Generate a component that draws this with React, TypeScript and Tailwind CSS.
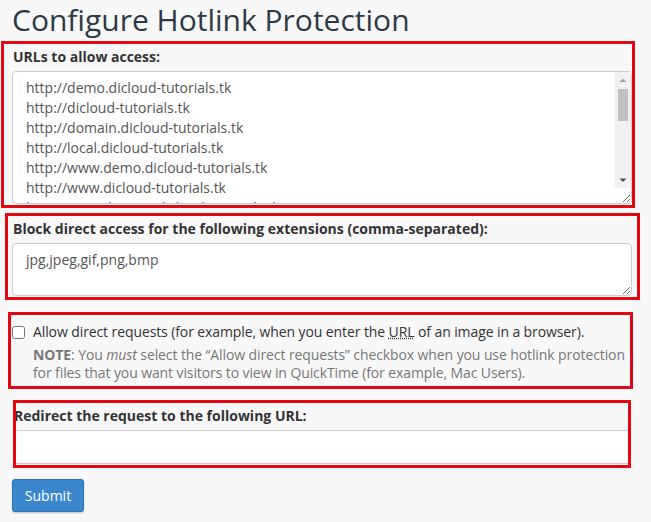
const URLS = [
  "http://demo.dicloud-tutorials.tk",
  "http://dicloud-tutorials.tk",
  "http://domain.dicloud-tutorials.tk",
  "http://local.dicloud-tutorials.tk",
  "http://www.demo.dicloud-tutorials.tk",
  "http://www.dicloud-tutorials.tk",
  "http://www.domain.dicloud-tutorials.tk",
  "http://www.local.dicloud-tutorials.tk",
  "https://demo.dicloud-tutorials.tk",
  "https://dicloud-tutorials.tk",
  "https://domain.dicloud-tutorials.tk",
  "https://local.dicloud-tutorials.tk",
  "https://www.demo.dicloud-tutorials.tk",
  "https://www.dicloud-tutorials.tk",
  "https://www.domain.dicloud-tutorials.tk",
  "https://www.local.dicloud-tutorials.tk",
  "http://mail.dicloud-tutorials.tk",
  "http://webmail.dicloud-tutorials.tk",
  "http://cpanel.dicloud-tutorials.tk",
  "https://mail.dicloud-tutorials.tk",
  "https://webmail.dicloud-tutorials.tk",
  "https://cpanel.dicloud-tutorials.tk",
];

// red annotation frame drawn over the content
const frame = "outline-3 outline-[#e30613] -outline-offset-3";

function Scrollbar() {
  return (
    <div className="absolute right-[1px] top-[1px] bottom-[16px] w-[16px] bg-[#f1f1f1] flex flex-col items-center pointer-events-none">
      <svg width="16" height="16" viewBox="0 0 16 16" className="shrink-0">
        <path d="M4.5 10 L8 6.5 L11.5 10 Z" fill="#a3a3a3" />
      </svg>
      <div className="w-[10px] h-[32px] bg-[#c1c1c1] mt-[1px]" />
      <div className="flex-1" />
      <svg width="16" height="16" viewBox="0 0 16 16" className="shrink-0">
        <path d="M4.5 6.5 L8 10 L11.5 6.5 Z" fill="#505050" />
      </svg>
    </div>
  );
}

export default function App() {
  return (
    <div className="w-[651px] h-[522px] overflow-hidden bg-[#f8f8f8] text-[#333] text-[14px] font-['Open_Sans',sans-serif]">
      {/* Title */}
      <h1 className="h-[41px] pl-[12px] pt-[1px] text-[30px] leading-[38px] text-[#2c3a47] font-normal">
        Configure Hotlink Protection
      </h1>

      {/* Allowed URLs */}
      <div className={`ml-[1px] w-[634px] h-[167px] pt-[6px] ${frame}`}>
        <label className="block pl-[12px] font-bold leading-[20px]">URLs to allow access:</label>
        <div className="relative mt-[4px] ml-[11px] w-[620px] h-[133px]">
          <textarea
            readOnly
            defaultValue={URLS.join("\n")}
            className="block w-full h-full overflow-hidden bg-white border border-[#ccc] rounded-[4px] pl-[13px] pr-[20px] pt-[6px] leading-[20px] text-[#555] outline-none"
          />
          <Scrollbar />
        </div>
      </div>

      {/* Extensions */}
      <div className={`mt-[5px] ml-[5px] w-[635px] h-[87px] pt-[6px] ${frame}`}>
        <label className="block pl-[8px] font-bold leading-[20px]">
          Block direct access for the following extensions (comma-separated):
        </label>
        <textarea
          readOnly
          defaultValue="jpg,jpeg,gif,png,bmp"
          className="mt-[4px] ml-[7px] block w-[620px] h-[53px] bg-white border border-[#ccc] rounded-[4px] pl-[13px] pt-[6px] leading-[20px] text-[#555] outline-none"
        />
      </div>

      {/* Allow direct requests */}
      <div className={`mt-[12px] ml-[8px] w-[625px] h-[77px] pt-[10px] tracking-[-0.1px] ${frame}`}>
        <div className="flex items-center pl-[4px] leading-[20px]">
          <input type="checkbox" className="m-0 w-[13px] h-[13px]" />
          <span className="ml-[8px]">
            Allow direct requests (for example, when you enter the{" "}
            <abbr title="Uniform Resource Locator" className="underline decoration-dotted">URL</abbr> of an image in a browser).
          </span>
        </div>
        <p className="mt-[4px] pl-[25px] pr-[1px] leading-[18px] text-[#777]">
          <b>NOTE</b>: You <i>must</i> select the “Allow direct requests” checkbox when you use hotlink protection
          for files that you want visitors to view in QuickTime (for example, Mac Users).
        </p>
      </div>

      {/* Redirect URL */}
      <div className={`mt-[11px] ml-[13px] w-[618px] h-[68px] pt-[6px] ${frame}`}>
        <label className="block pl-[1px] font-bold leading-[20px]">Redirect the request to the following URL:</label>
        <input
          type="text"
          className="mt-[4px] block w-full h-[34px] bg-white border border-[#ccc] border-b-[#e4b9bb] outline-none"
        />
      </div>

      <button className="mt-[11px] ml-[12px] w-[72px] h-[33px] rounded-[3px] bg-[#3a87cd] border border-[#2f72b0] text-white text-[14px] shadow-[0_1px_2px_rgba(0,0,0,0.25)]">
        Submit
      </button>
    </div>
  );
}
